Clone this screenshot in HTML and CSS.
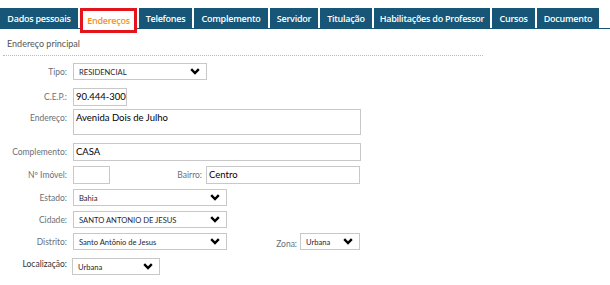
FILE: index.html
```html
<!DOCTYPE html>
<html>
    <head>
        <meta charset="UTF-8">
        <title>Endereços</title>
        <link rel="stylesheet" href="styles.css">
    </head>
    <body>
        <div class="tabs">
            <div class="tab">Dados pessoais</div>
            <div class="tab active">Endereços</div>
            <div class="tab">Telefones</div>
            <div class="tab">Complemento</div>
            <div class="tab">Servidor</div>
            <div class="tab">Titulação</div>
            <div class="tab">Habilitações do Professor</div>
            <div class="tab">Cursos</div>
            <div class="tab">Documento</div>
        </div>

        <div class="section">Endereço principal</div>

        <div class="form">
            <div class="row r-tipo">
                <label>Tipo:</label>
                <div class="select w-tipo"><span>RESIDENCIAL</span>
                    <svg class="chev" width="10" height="7" viewBox="0 0 10 7"><polyline points="1.2,1.2 5,5 8.8,1.2"/></svg>
                </div>
            </div>
            <div class="row r-cep">
                <label>C.E.P.:</label>
                <div class="input w-cep">90.444-300</div>
            </div>
            <div class="row r-end top">
                <label>Endereço:</label>
                <div class="input area w-full">Avenida Dois de Julho</div>
            </div>
            <div class="row r-comp">
                <label>Complemento:</label>
                <div class="input w-full">CASA</div>
            </div>
            <div class="row r-num">
                <label>Nº Imóvel:</label>
                <div class="input w-num"></div>
                <label class="inline l-bairro">Bairro:</label>
                <div class="input w-bairro">Centro</div>
            </div>
            <div class="row r-std">
                <label>Estado:</label>
                <div class="select w-mid"><span>Bahia</span>
                    <svg class="chev" width="10" height="7" viewBox="0 0 10 7"><polyline points="1.2,1.2 5,5 8.8,1.2"/></svg>
                </div>
            </div>
            <div class="row r-std">
                <label>Cidade:</label>
                <div class="select w-mid"><span>SANTO ANTONIO DE JESUS</span>
                    <svg class="chev" width="10" height="7" viewBox="0 0 10 7"><polyline points="1.2,1.2 5,5 8.8,1.2"/></svg>
                </div>
            </div>
            <div class="row r-std">
                <label>Distrito:</label>
                <div class="select w-mid"><span>Santo Antônio de Jesus</span>
                    <svg class="chev" width="10" height="7" viewBox="0 0 10 7"><polyline points="1.2,1.2 5,5 8.8,1.2"/></svg>
                </div>
                <label class="inline l-zona">Zona:</label>
                <div class="select w-zona"><span>Urbana</span>
                    <svg class="chev" width="10" height="7" viewBox="0 0 10 7"><polyline points="1.2,1.2 5,5 8.8,1.2"/></svg>
                </div>
            </div>
            <div class="row r-loc">
                <label class="dark">Localização:</label>
                <div class="select w-loc"><span>Urbana</span>
                    <svg class="chev" width="10" height="7" viewBox="0 0 10 7"><polyline points="1.2,1.2 5,5 8.8,1.2"/></svg>
                </div>
            </div>
        </div>
    </body>
</html>
```

FILE: styles.css
```css
html, body {
    margin: 0px;
    padding: 0px;
    background-color: #fff;
    font-family: Lato, "Open Sans", sans-serif;
}

.tabs {
    display: flex;
    align-items: flex-start;
    gap: 2px;
    margin-top: 8px;
    height: 20px;
    border-bottom: 1px solid #175677;
}

.tab {
    flex: none;
    height: 20px;
    line-height: 21px;
    background-color: #175677;
    color: #fff;
    font-family: "Open Sans", sans-serif;
    font-size: 9px;
    font-weight: 600;
    letter-spacing: -0.25px;
    text-align: center;
    white-space: nowrap;
}

/* tab widths as they sit in the bar */
.tab:nth-child(1) { width: 78px; }
.tab:nth-child(2) { width: 57px; }
.tab:nth-child(3) { width: 53px; }
.tab:nth-child(4) { width: 74px; }
.tab:nth-child(5) { width: 48px; }
.tab:nth-child(6) { width: 52px; }
.tab:nth-child(7) { width: 116px; }
.tab:nth-child(8) { width: 43px; }
.tab:nth-child(9) { width: 62px; }

.tab.active {
    position: relative;
    height: 25px;
    line-height: 19px;
    box-sizing: border-box;
    background-color: #fff;
    color: #f7901e;
    border: 3px solid #e3141b;
    z-index: 2;
}

.section {
    width: 476px;
    margin: 5px 0px 0px 3px;
    padding: 0px 0px 2px 4px;
    height: 19px;
    line-height: 19px;
    font-size: 9px;
    color: #555;
    border-bottom: 1px dotted #bbb;
}

.form {
    padding-top: 7px;
}

.row {
    display: flex;
    align-items: center;
}

.row.top {
    align-items: flex-start;
}

.row label {
    width: 67px;
    margin-right: 6px;
    text-align: right;
    font-size: 8.5px;
    color: #6a6f78;
    white-space: nowrap;
}

.row.top label {
    padding-top: 4px;
}

.row label.dark {
    color: #333;
    margin-top: -6px;
    margin-right: 5px;
}

.l-bairro {
    width: 92px !important;
    margin-right: 4px !important;
}

.l-zona {
    width: 70px !important;
    margin-right: 3px !important;
    margin-top: 4px;
}

.r-tipo { margin-top: 0px; }
.r-cep { margin-top: 8px; }
.r-end { margin-top: 3px; }
.r-comp { margin-top: 8px; }
.r-num { margin-top: 5px; }
.r-std { margin-top: 5px; }
.r-loc { margin-top: 8px; }

.input, .select {
    box-sizing: border-box;
    height: 18px;
    border: 1px solid #c8c8c8;
    background-color: #fff;
    color: #000;
    font-size: 9.5px;
    line-height: 16px;
    padding: 0px 2px;
    white-space: nowrap;
}

.input.area {
    height: 26px;
}

.select {
    display: flex;
    align-items: center;
    justify-content: space-between;
    height: 17px;
    padding: 0px 6px 0px 5px;
    font-size: 7.6px;
    color: #1f2533;
}

.chev {
    fill: none;
    stroke: #000;
    stroke-width: 2.4;
}

.w-tipo { width: 134px; }
.w-cep { width: 54px; }
.w-full { width: 288px; }
.w-num { width: 37px; }
.w-bairro { width: 154px; }
.w-mid { width: 154px; }
.w-zona { width: 60px; }
.w-loc { width: 88px; }
```
